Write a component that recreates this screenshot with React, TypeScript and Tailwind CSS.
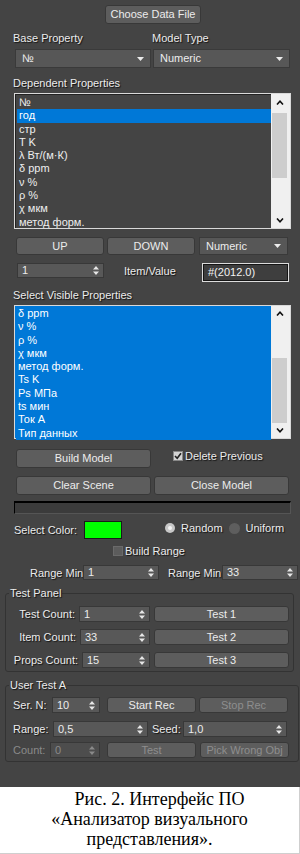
import React from 'react';

const shadow = '[text-shadow:1px_1px_1px_rgba(0,0,0,0.75)]';

const SpinArrows = ({ dim }: { dim?: boolean }) => (
  <svg width="6" height="9" viewBox="0 0 6 9" className="shrink-0">
    <path d="M3 0L6 3.5H0Z M3 9L6 5.5H0Z" fill={dim ? '#8a8a8a' : '#e6e6e6'} />
  </svg>
);

const DropArrow = () => (
  <svg width="7" height="4" viewBox="0 0 7 4" className="shrink-0">
    <path d="M0 0H7L3.5 4Z" fill="#ececec" />
  </svg>
);

const Chevron = ({ up }: { up?: boolean }) => (
  <svg width="8" height="5" viewBox="0 0 8 5">
    <path d={up ? 'M1 4.5L4 1.2L7 4.5' : 'M1 0.5L4 3.8L7 0.5'} stroke="#111" strokeWidth="1.6" fill="none" />
  </svg>
);

const Btn = ({ label, className, disabled }: { label: string; className: string; disabled?: boolean }) => (
  <div
    className={`flex items-center justify-center rounded-[3px] border border-[#383838] bg-[#5d5d5d] text-[11px] shrink-0 ${
      disabled ? 'text-[#8e8e8e]' : 'text-[#ececec]'
    } ${className}`}
  >
    {label}
  </div>
);

const Drop = ({ value, className }: { value: string; className: string }) => (
  <div className={`flex items-center justify-between border border-[#3a3a3a] bg-[#575757] pl-[6px] pr-[6px] text-[11px] text-[#ececec] shrink-0 ${className}`}>
    <span>{value}</span>
    <DropArrow />
  </div>
);

const Spin = ({ value, className, disabled }: { value: string; className: string; disabled?: boolean }) => (
  <div
    className={`flex items-center justify-between border border-[#383838] pl-[4px] pr-[4px] text-[11px] shrink-0 ${
      disabled ? 'bg-[#4d4d4d] text-[#8a8a8a]' : 'bg-[#585858] text-[#ececec]'
    } ${className}`}
  >
    <span>{value}</span>
    <SpinArrows dim={disabled} />
  </div>
);

const Label = ({ text, className = '', dim }: { text: string; className?: string; dim?: boolean }) => (
  <div className={`text-[11px] leading-[14px] shrink-0 whitespace-nowrap ${dim ? 'text-[#8a8a8a]' : `text-[#ececec] ${shadow}`} ${className}`}>
    {text}
  </div>
);

const ListBox = ({ items, selected, all, thumbTop, className }: { items: string[]; selected: number[]; all?: boolean; thumbTop: string; className: string }) => (
  <div className={`ml-[14px] w-[277px] flex border border-[#d9d9d9] ${className}`}>
    <div className={`flex-1 pl-[1px] pt-[1px] ${all ? 'bg-[#0078d7]' : 'bg-[#444444] border-t border-l border-[#222]'}`}>
      {items.map((it, i) => (
        <div
          key={it}
          className={`h-[13.3px] leading-[13.3px] pl-[2px] text-[11px] whitespace-nowrap ${
            all || selected.includes(i) ? 'bg-[#0078d7] text-white' : 'text-[#eeeeee]'
          }`}
        >
          {it}
        </div>
      ))}
    </div>
    <div className="w-[19px] bg-[#f0f0f0] pl-[1px] pr-[3px] flex flex-col">
      <div className="h-[16px] flex items-center justify-center">
        <Chevron up />
      </div>
      <div className="flex-1">
        <div className={`h-[65px] bg-[#cdcdcd] ${thumbTop}`} />
      </div>
      <div className="h-[16px] flex items-center justify-center">
        <Chevron />
      </div>
    </div>
  </div>
);

export default function App() {
  const dep = ['№', 'год', 'стр', 'T K', 'λ Вт/(м·К)', 'δ ppm', 'ν %', 'ρ %', 'χ мкм', 'метод форм.'];
  const vis = ['δ ppm', 'ν %', 'ρ %', 'χ мкм', 'метод форм.', 'Ts K', 'Ps МПа', 'ts мин', 'Ток А', 'Тип данных'];

  return (
    <div className="w-[300px] h-[854px] bg-white font-['Liberation_Sans',Arial,sans-serif]">
      <div className="h-[787px] bg-[#444444] pt-[5px] flex flex-col">
        <Btn label="Choose Data File" className="ml-[105px] w-[96px] h-[19px]" />

        <div className="mt-[7px] flex pl-[13px]">
          <Label text="Base Property" className="w-[139px]" />
          <Label text="Model Type" />
        </div>

        <div className="mt-[4px] flex pl-[15px] gap-[2px]">
          <Drop value="№" className="w-[136px] h-[19px]" />
          <Drop value="Numeric" className="w-[137px] h-[19px]" />
        </div>

        <Label text="Dependent Properties" className="mt-[8px] ml-[13px]" />

        <ListBox items={dep} selected={[1]} thumbTop="mt-[3px]" className="mt-[3px] h-[136px]" />

        <div className="mt-[8px] flex pl-[16px]">
          <Btn label="UP" className="w-[88px] h-[18px]" />
          <Btn label="DOWN" className="ml-[3px] w-[88px] h-[18px]" />
          <Drop value="Numeric" className="ml-[4px] w-[89px] h-[18px]" />
        </div>

        <div className="mt-[8px] flex items-start pl-[17px] h-[19px]">
          <Spin value="1" className="w-[87px] h-[15px]" />
          <Label text="Item/Value" className="ml-[20px] mt-[1px]" />
          <div className="ml-auto mr-[11px] w-[87px] h-[19px] border border-[#dcdcdc] bg-[#3e3e3e] shadow-[inset_0_0_0_1px_#151515] pl-[5px] text-[11px] leading-[17px] text-[#f2f2f2]">
            #(2012.0)
          </div>
        </div>

        <Label text="Select Visible Properties" className="mt-[6px] ml-[13px]" />

        <ListBox items={vis} selected={[]} all thumbTop="mt-[36px]" className="mt-[3px] h-[134px]" />

        <div className="mt-[10px] flex items-center pl-[16px] h-[19px]">
          <Btn label="Build Model" className="w-[135px] h-[19px]" />
          <div className="ml-[22px] mb-[6px] flex items-center">
            <div className="w-[10px] h-[10px] bg-[#d4d4d4] border border-[#888] flex items-center justify-center">
              <svg width="8" height="8" viewBox="0 0 8 8">
                <path d="M1 4L3.2 6.3L7 1.2" stroke="#222" strokeWidth="1.6" fill="none" />
              </svg>
            </div>
            <Label text="Delete Previous" className="ml-[2px]" />
          </div>
        </div>

        <div className="mt-[8px] flex pl-[16px] gap-[3px]">
          <Btn label="Clear Scene" className="w-[135px] h-[19px]" />
          <Btn label="Close Model" className="w-[135px] h-[19px]" />
        </div>

        <div className="mt-[6px] ml-[14px] w-[277px] h-[13px] bg-[#3b3b3b] border-t-2 border-l border-t-black border-l-black border-r border-b border-r-[#555] border-b-[#555]" />

        <div className="mt-[7px] flex items-center pl-[14px] h-[18px]">
          <Label text="Select Color:" />
          <div className="ml-[7px] w-[38px] h-[18px] bg-[#00ff00] border border-[#1a1a1a]" />
          <div className="ml-[43px] mb-[4px] flex items-center">
            <div className="w-[10px] h-[10px] rounded-full bg-[#c8c8c8] flex items-center justify-center">
              <div className="w-[4px] h-[4px] rounded-full bg-[#f4f4f4]" />
            </div>
            <Label text="Random" className="ml-[6px]" />
            <div className="ml-[6px] w-[11px] h-[11px] rounded-full bg-[#5e5e5e]" />
            <Label text="Uniform" className="ml-[6px]" />
          </div>
        </div>

        <div className="mt-[6px] flex items-center pl-[113px] h-[12px]">
          <div className="w-[10px] h-[10px] bg-[#5c5c5c] border border-[#6a6a6a]" />
          <Label text="Build Range" className="ml-[2px]" />
        </div>

        <div className="mt-[8px] flex items-center pl-[30px] h-[15px]">
          <Label text="Range Min" className="w-[50px]" />
          <Spin value="1" className="ml-[3px] w-[76px] h-[15px]" />
          <Label text="Range Min" className="ml-[9px] w-[50px]" />
          <Spin value="33" className="ml-[4px] w-[76px] h-[15px]" />
        </div>

        <fieldset className="mt-[6px] ml-[5px] w-[289px] border border-[#333] rounded-[3px] pb-[3px]">
          <legend className="ml-[3px] px-[1px] text-[11px] leading-[14px] text-[#ececec] [text-shadow:1px_1px_1px_rgba(0,0,0,0.75)]">Test Panel</legend>
          <div className="mt-[6px] flex flex-col gap-[7px]">
            <div className="flex items-center h-[16px]">
              <Label text="Test Count:" className="w-[69px] text-right" />
              <Spin value="1" className="ml-[4px] w-[71px] h-[16px]" />
              <Btn label="Test 1" className="ml-[4px] w-[135px] h-[16px]" />
            </div>
            <div className="flex items-center h-[16px]">
              <Label text="Item Count:" className="w-[70px] text-right" />
              <Spin value="33" className="ml-[4px] w-[70px] h-[16px]" />
              <Btn label="Test 2" className="ml-[4px] w-[135px] h-[16px]" />
            </div>
            <div className="flex items-center h-[16px]">
              <Label text="Props Count:" className="w-[72px] text-right" />
              <Spin value="15" className="ml-[4px] w-[68px] h-[16px]" />
              <Btn label="Test 3" className="ml-[4px] w-[135px] h-[16px]" />
            </div>
          </div>
        </fieldset>

        <fieldset className="mt-[6px] ml-[5px] w-[294px] border border-[#333] rounded-[3px] pb-[3px]">
          <legend className="ml-[3px] px-[1px] text-[11px] leading-[14px] text-[#ececec] [text-shadow:1px_1px_1px_rgba(0,0,0,0.75)]">User Test A</legend>
          <div className="mt-[5px] flex flex-col">
            <div className="flex items-center h-[16px]">
              <Label text="Ser. N:" className="ml-[7px] w-[36px]" />
              <Spin value="10" className="ml-[3px] w-[48px] h-[16px]" />
              <Btn label="Start Rec" className="ml-[7px] w-[89px] h-[16px]" />
              <Btn label="Stop Rec" disabled className="ml-[3px] w-[89px] h-[16px]" />
            </div>
            <div className="mt-[8px] flex items-center h-[16px]">
              <Label text="Range:" className="ml-[7px] w-[40px]" />
              <Spin value="0,5" className="w-[95px] h-[16px]" />
              <Label text="Seed:" className="ml-[4px] w-[31px]" />
              <Spin value="1,0" className="w-[104px] h-[16px]" />
            </div>
            <div className="mt-[5px] flex items-center h-[16px]">
              <Label text="Count:" dim className="ml-[7px] w-[37px]" />
              <Spin value="0" disabled className="w-[50px] h-[16px]" />
              <Btn label="Test" disabled className="ml-[7px] w-[89px] h-[16px]" />
              <Btn label="Pick Wrong Obj" disabled className="ml-[4px] w-[89px] h-[16px]" />
            </div>
          </div>
        </fieldset>
      </div>

      <div className="h-[67px] pt-[2px] border-r border-b border-[#cfcfcf] font-['Liberation_Serif','Times_New_Roman',serif] text-[18px] leading-[20px] text-black text-center">
        <div className="pl-[20px]">Рис. 2. Интерфейс ПО</div>
        <div>«Анализатор визуального</div>
        <div>представления».</div>
      </div>
    </div>
  );
}
